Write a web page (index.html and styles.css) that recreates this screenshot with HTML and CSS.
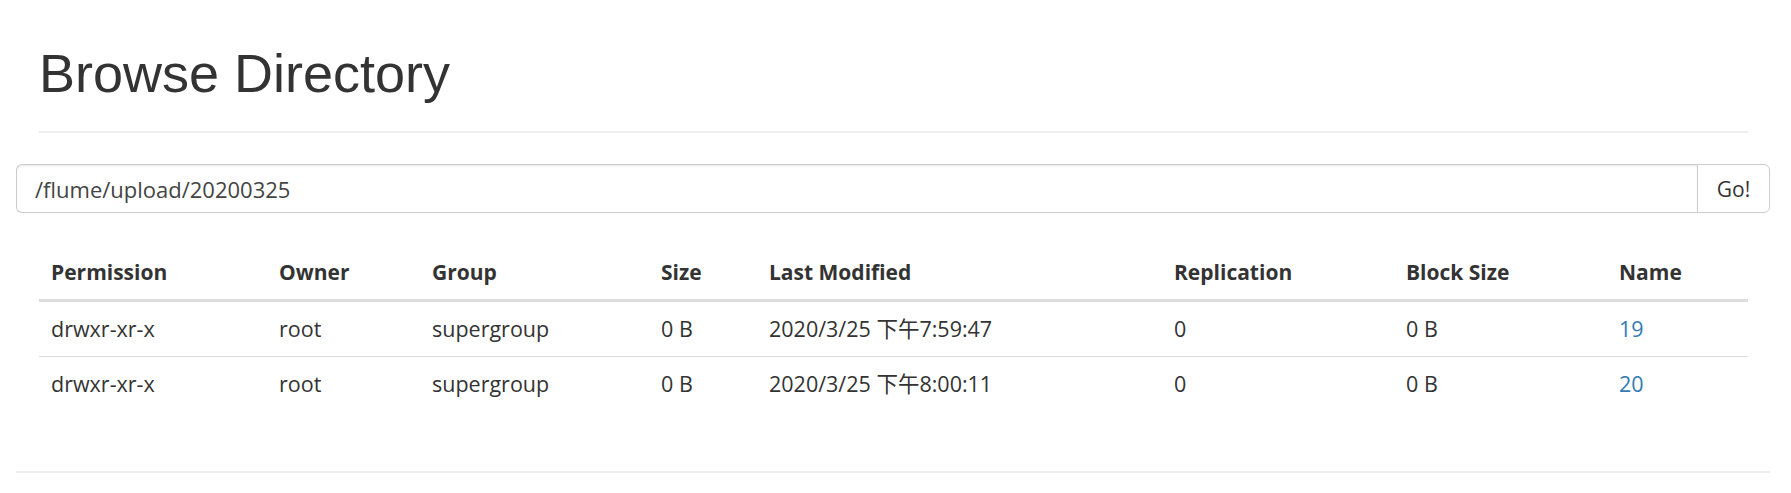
FILE: index.html
```html
<!DOCTYPE html>
<html lang="en">
<head>
<meta charset="utf-8">
<title>Browsing HDFS</title>
<link rel="stylesheet" href="styles.css">
</head>
<body>
<div class="container">
  <div class="page-header">
    <h1>Browse Directory</h1>
  </div>
  <form class="row input-group">
    <input class="form-control" type="text" value="/flume/upload/20200325">
    <button class="btn" type="button">Go!</button>
  </form>
  <table class="table">
    <colgroup>
      <col class="c-perm"><col class="c-owner"><col class="c-group"><col class="c-size">
      <col class="c-mod"><col class="c-rep"><col class="c-block"><col class="c-name">
    </colgroup>
    <thead>
      <tr>
        <th>Permission</th><th>Owner</th><th>Group</th><th>Size</th>
        <th>Last Modified</th><th>Replication</th><th>Block Size</th><th>Name</th>
      </tr>
    </thead>
    <tbody>
      <tr>
        <td>drwxr-xr-x</td><td>root</td><td>supergroup</td><td>0 B</td>
        <td>2020/3/25 下午7:59:47</td><td>0</td><td>0 B</td><td><a href="#">19</a></td>
      </tr>
      <tr>
        <td>drwxr-xr-x</td><td>root</td><td>supergroup</td><td>0 B</td>
        <td>2020/3/25 下午8:00:11</td><td>0</td><td>0 B</td><td><a href="#">20</a></td>
      </tr>
    </tbody>
  </table>
  <hr class="row footer-rule">
</div>
</body>
</html>
```
FILE: styles.css
```css
html, body {
  margin: 0;
  padding: 0;
  background: #fff;
}
body {
  font-family: "Open Sans", "Noto Sans CJK SC", sans-serif;
  font-size: 21.5px;
  line-height: 30px;
  color: #333;
}
.container {
  padding: 0 43px 0 39px;
}
.row {
  margin-left: -23px;
  margin-right: -22px;
}
.page-header {
  border-bottom: 2px solid #eee;
  padding-bottom: 13px;
}
.page-header h1 {
  margin: 0;
  padding-top: 44px;
  padding-bottom: 15px;
  font-family: "Liberation Sans", Arial, sans-serif;
  font-weight: 400;
  font-size: 54px;
  line-height: 59px;
  color: #333;
}
.input-group {
  display: flex;
  margin-top: 31px;
  height: 49px;
}
.form-control {
  flex: 1;
  min-width: 0;
  box-sizing: border-box;
  height: 49px;
  margin: 0;
  padding: 0 18px;
  border: 1.5px solid #ccc;
  border-right: 0;
  border-radius: 6px 0 0 6px;
  box-shadow: inset 0 1.5px 1.5px rgba(0, 0, 0, 0.075);
  font-family: "Open Sans", sans-serif;
  font-size: 22px;
  color: #444;
  background: #fff;
  outline: none;
}
.btn {
  box-sizing: border-box;
  width: 73px;
  height: 49px;
  margin: 0;
  padding: 0;
  border: 1.5px solid #ccc;
  border-radius: 0 6px 6px 0;
  background: #fff;
  font-family: "Open Sans", sans-serif;
  font-size: 21px;
  color: #333;
}
.table {
  width: 100%;
  table-layout: fixed;
  border-collapse: collapse;
  border-spacing: 0;
  margin-top: 32px;
}
.c-perm { width: 228px; }
.c-owner { width: 153px; }
.c-group { width: 229px; }
.c-size { width: 108px; }
.c-mod { width: 405px; }
.c-rep { width: 232px; }
.c-block { width: 213px; }
.c-name { width: auto; }
.table th,
.table td {
  padding: 12px;
  text-align: left;
  line-height: 30px;
  white-space: nowrap;
}
.table th {
  font-size: 21px;
  font-weight: 700;
  vertical-align: bottom;
  border-bottom: 3px solid #ddd;
}
.table td {
  vertical-align: top;
  border-top: 1px solid #ddd;
}
.table a {
  color: #337ab7;
  text-decoration: none;
}
.footer-rule {
  margin-top: 60px;
  margin-bottom: 0;
  border: 0;
  border-top: 2px solid #eee;
  height: 0;
}
```
